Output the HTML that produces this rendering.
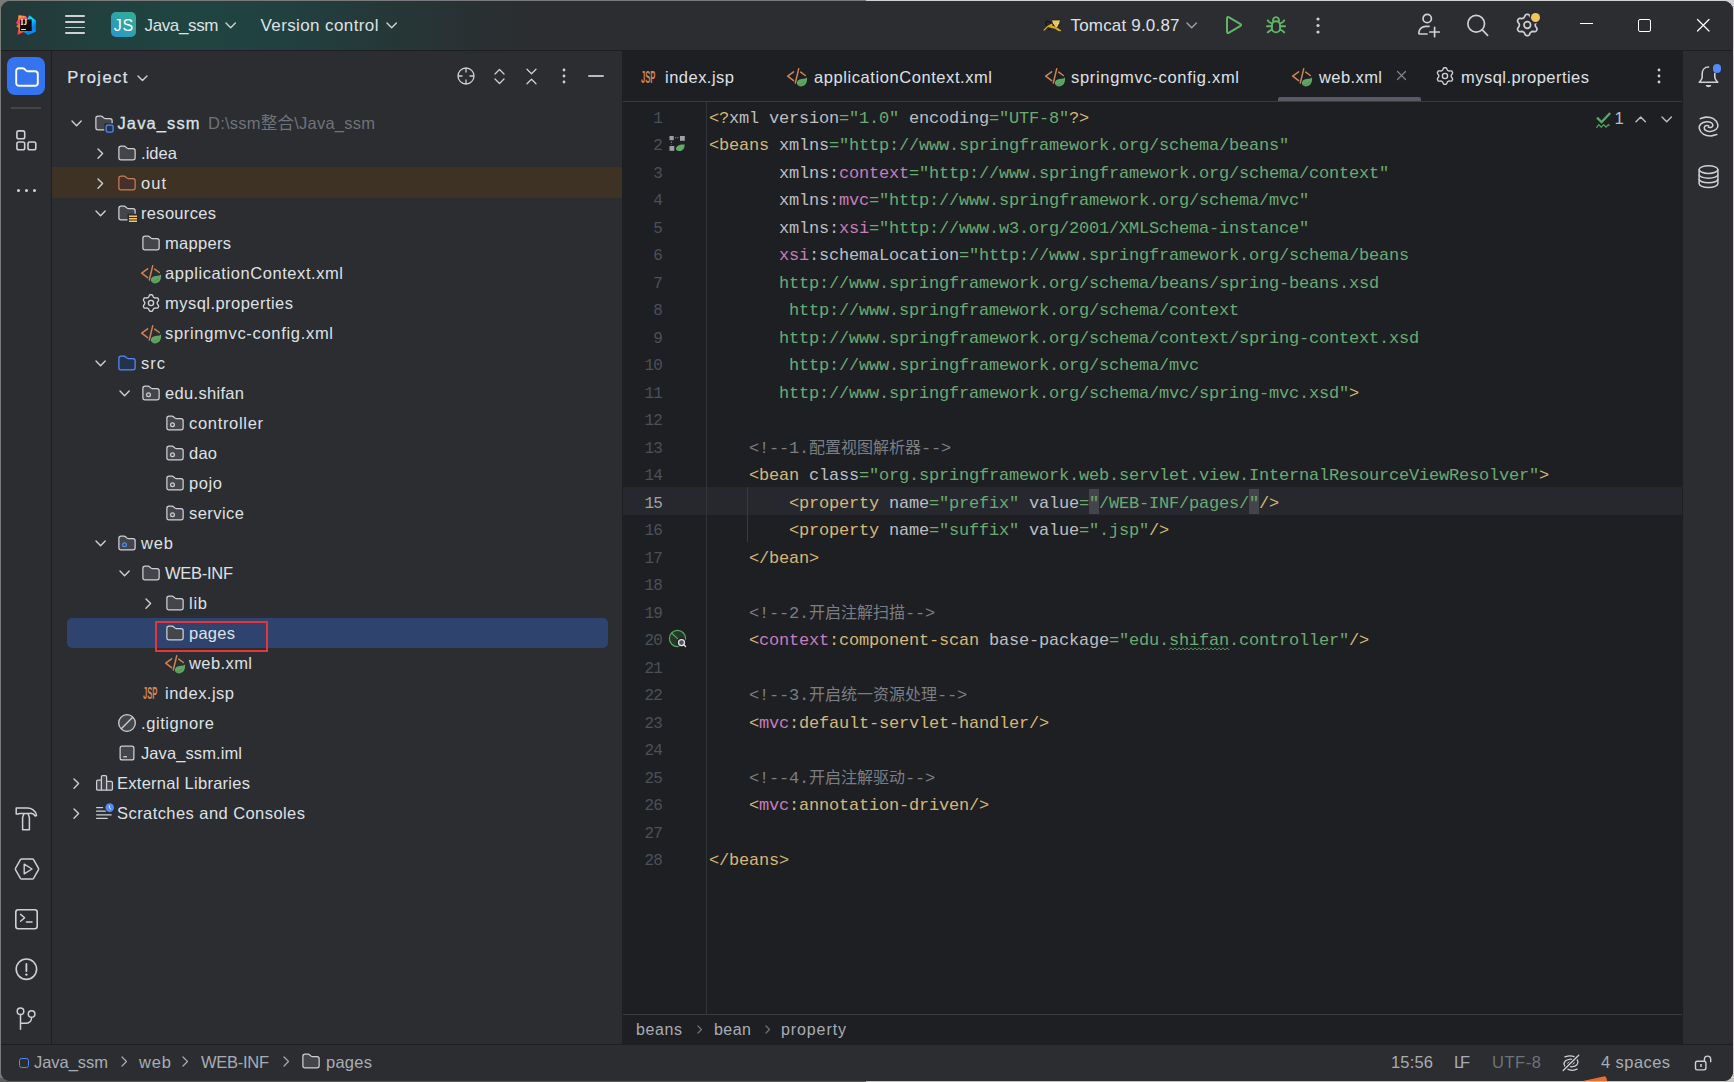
<!DOCTYPE html><html><head><meta charset="utf-8"><title>Java_ssm - web.xml</title><style>html,body{margin:0;padding:0}body{width:1734px;height:1082px;overflow:hidden;position:relative;background:#8a8a8a;}#win{position:absolute;left:1px;top:1px;width:1732px;height:1079.5px;border-radius:9px;overflow:hidden;background:#2B2D30}#win *{box-sizing:border-box}.c{position:absolute;left:0;height:28px;line-height:28px;white-space:pre;font-family:'Liberation Mono','Noto Sans CJK SC',monospace;font-size:17px;letter-spacing:-0.2015px;color:#BCBEC4}.w{}.t{color:#D5B778}.s{color:#6AAB73}.n{color:#C77DBB}.m{color:#7A7E85}.k{font-size:16px;letter-spacing:0}</style></head><body><div style="position:absolute;left:0;top:0;width:866px;height:1082px;background:#7a7a7a"></div>
<div style="position:absolute;left:866px;top:0;width:868px;height:1082px;background:#d2d2d2"></div>
<div style="position:absolute;left:0px;top:1078px;width:866px;height:4px;background:#5c5c5c"></div>
<div style="position:absolute;left:866px;top:1078px;width:868px;height:4px;background:#c4c4c4"></div>
<div id="win"><div style="position:absolute;left:-1px;top:-1px;width:1734px;height:1082px">
<div style="position:absolute;left:0px;top:0px;width:1734px;height:50px;background:linear-gradient(90deg,#243838 0px,#21403E 100px,#1F4541 190px,#214040 290px,#253838 380px,#293133 460px,#2B2D30 535px);"></div>
<div style="position:absolute;left:0px;top:50px;width:1734px;height:1px;background:#1E1F22;"></div>
<svg style="position:absolute;left:16px;top:15px;overflow:visible" width="20" height="20" viewBox="0 0 20 20" fill="none" ><defs><linearGradient id="ijA" x1="0.3" y1="0" x2="0.5" y2="1"><stop offset="0" stop-color="#FDC50D"/><stop offset="0.3" stop-color="#FF318C"/><stop offset="0.55" stop-color="#FC801D"/><stop offset="1" stop-color="#FE2857"/></linearGradient><linearGradient id="ijB" x1="0.2" y1="0" x2="0.8" y2="1"><stop offset="0" stop-color="#07C3F2"/><stop offset="0.35" stop-color="#0DD8FA"/><stop offset="0.7" stop-color="#087CFA"/><stop offset="1" stop-color="#0A9BF5"/></linearGradient></defs><path d="M2.6 0.2 L9.4 1 L12.4 4.6 L6 14 L8.6 16.8 L1.4 19.9 L2.7 13 L0.2 11.6 L1.9 9.6 L0 7.8 L1.7 5.6 Z" fill="url(#ijA)"/><path d="M13.4 0.3 L20 5.4 L19.7 16.8 L12 20.1 L7.8 17 L12 12 L11.6 3.4 Z" fill="url(#ijB)"/><rect x="4.1" y="4.4" width="11.6" height="11.6" fill="#0A0A0C"/><rect x="5.1" y="14" width="4.8" height="0.9" fill="#fff"/><text x="4.6" y="10.4" font-family="Liberation Serif,serif" font-weight="700" font-size="7.4" fill="#fff">IJ</text></svg>
<div style="position:absolute;left:65px;top:15.299999999999999px;width:20px;height:1.9px;background:#CED0D6;border-radius:1px;"></div>
<div style="position:absolute;left:65px;top:20.900000000000002px;width:20px;height:1.9px;background:#CED0D6;border-radius:1px;"></div>
<div style="position:absolute;left:65px;top:26.5px;width:20px;height:1.9px;background:#CED0D6;border-radius:1px;"></div>
<div style="position:absolute;left:65px;top:32.1px;width:20px;height:1.9px;background:#CED0D6;border-radius:1px;"></div>
<div style="position:absolute;left:111px;top:12px;width:25px;height:25px;border-radius:5px;background:linear-gradient(45deg,#2A95CC 0%,#2FA5A8 60%,#34AE8E 100%)"></div>
<span style="position:absolute;left:113.8px;top:13.600000000000001px;height:24px;line-height:24px;font-family:'Liberation Sans','Noto Sans CJK SC',sans-serif;font-size:16px;color:#FFFFFF;font-weight:400;white-space:pre;letter-spacing:0.828px;">JS</span>
<span style="position:absolute;left:144.5px;top:13.8px;height:24px;line-height:24px;font-family:'Liberation Sans','Noto Sans CJK SC',sans-serif;font-size:17px;color:#DFE1E5;font-weight:400;white-space:pre;letter-spacing:-0.362px;">Java_ssm</span>
<svg style="position:absolute;left:226.3px;top:22.900000000000002px;overflow:visible" width="9.4" height="4.8" viewBox="0 0 9.4 4.8" fill="none" ><path d="M0 0 L4.7 4.8 L9.4 0" stroke="#CED0D6" stroke-width="1.4" stroke-linecap="round" stroke-linejoin="round"/></svg>
<span style="position:absolute;left:260.5px;top:13.8px;height:24px;line-height:24px;font-family:'Liberation Sans','Noto Sans CJK SC',sans-serif;font-size:17px;color:#DFE1E5;font-weight:400;white-space:pre;letter-spacing:0.396px;">Version control</span>
<svg style="position:absolute;left:387.3px;top:22.900000000000002px;overflow:visible" width="9.4" height="4.8" viewBox="0 0 9.4 4.8" fill="none" ><path d="M0 0 L4.7 4.8 L9.4 0" stroke="#CED0D6" stroke-width="1.4" stroke-linecap="round" stroke-linejoin="round"/></svg>
<svg style="position:absolute;left:1038px;top:10px;overflow:visible" width="30" height="30" viewBox="0 0 30 30" fill="none" ><path d="M8.6 15.4 C6.6 12.4 8.8 10.8 11 11.6 L13.2 13.4" stroke="#17181A" stroke-width="1.5" fill="none" stroke-linecap="round"/><path d="M5.3 20.7 L6 19.2 L9.4 15.9 L13.6 13.6 L16 16.2 L19 17.4 L23.3 20.4 L22.6 21.3 L20.4 21 L17 18.7 L12.6 17.7 L10 17 L6.6 20.6 Z" fill="#D9A91E"/><path d="M10 17.8 L12.8 19.4 L11.6 19.9 L10.2 18.9 Z" fill="#17181A"/><path d="M14 9 L15.9 9.2 L15 10.8 Z M21.9 9 L20 9.2 L20.9 10.8 Z" fill="#17181A"/><path d="M14.2 10 L15.8 10.5 L20.1 10.5 L21.7 10 L21.2 13.6 L19.2 16.9 L17.6 16.9 L15 13.6 Z" fill="#EDD06C"/><circle cx="15.2" cy="15.2" r="0.75" fill="#0c0c0c"/><circle cx="20.9" cy="15.2" r="0.6" fill="#17181A"/><path d="M16.4 12.4 L17.6 12.7 M19.6 12.4 L18.6 12.7 M17.4 14.6 H18.8" stroke="#B98F2A" stroke-width="0.5"/></svg>
<span style="position:absolute;left:1070.5px;top:13.8px;height:24px;line-height:24px;font-family:'Liberation Sans','Noto Sans CJK SC',sans-serif;font-size:17px;color:#DFE1E5;font-weight:400;white-space:pre;letter-spacing:0.185px;">Tomcat 9.0.87</span>
<svg style="position:absolute;left:1187.3px;top:23.400000000000002px;overflow:visible" width="9.4" height="4.8" viewBox="0 0 9.4 4.8" fill="none" ><path d="M0 0 L4.7 4.8 L9.4 0" stroke="#9DA0A8" stroke-width="1.4" stroke-linecap="round" stroke-linejoin="round"/></svg>
<svg style="position:absolute;left:1225px;top:15px;overflow:visible" width="18" height="20" viewBox="0 0 18 20" fill="none" ><path d="M2 3.2 C2 2.3 2.9 1.8 3.7 2.2 L15.5 9.1 C16.2 9.5 16.2 10.5 15.5 10.9 L3.7 17.8 C2.9 18.2 2 17.7 2 16.8 Z" stroke="#62B567" stroke-width="2" stroke-linejoin="round"/></svg>
<svg style="position:absolute;left:1266px;top:15px;overflow:visible" width="20" height="19" viewBox="0 0 20 19" fill="none" ><rect x="5.9" y="6.2" width="8.2" height="11.2" rx="4.1" stroke="#62B567" stroke-width="1.9"/><path d="M6.9 6.6 C6.7 3.8 8.2 2.1 10 2.1 C11.8 2.1 13.3 3.8 13.1 6.6" stroke="#62B567" stroke-width="1.9" fill="none"/><path d="M5.9 11.3 H1 M14.1 11.3 H19 M5.9 8.4 C4.2 8 2.8 7 1.8 5.4 M14.1 8.4 C15.8 8 17.2 7 18.2 5.4 M6.2 14.6 C4.4 15 3 16 1.8 17.4 M13.8 14.6 C15.6 15 17 16 18.2 17.4" stroke="#62B567" stroke-width="1.9" stroke-linecap="round" fill="none"/></svg>
<svg style="position:absolute;left:1316px;top:16.5px;overflow:visible" width="4" height="17" viewBox="0 0 4 17" fill="none" ><circle cx="2" cy="2" r="1.6" fill="#CED0D6"/><circle cx="2" cy="8.5" r="1.6" fill="#CED0D6"/><circle cx="2" cy="15" r="1.6" fill="#CED0D6"/></svg>
<svg style="position:absolute;left:1415px;top:10px;overflow:visible" width="28" height="30" viewBox="0 0 28 30" fill="none" ><circle cx="12.2" cy="8.5" r="4.2" stroke="#CED0D6" stroke-width="1.7"/><path d="M14 16.3 H11 C6.6 16.3 3.8 19.4 3.8 23 C3.8 23.6 4.2 24 4.8 24 H12" stroke="#CED0D6" stroke-width="1.7" stroke-linecap="round"/><path d="M19.6 17.3 V26.7 M14.9 22 H24.3" stroke="#CED0D6" stroke-width="1.7" stroke-linecap="round"/></svg>
<svg style="position:absolute;left:1465px;top:12px;overflow:visible" width="26" height="26" viewBox="0 0 26 26" fill="none" ><circle cx="11.2" cy="11.8" r="8.35" stroke="#CED0D6" stroke-width="1.7"/><path d="M17.3 17.9 L22.6 23.4" stroke="#CED0D6" stroke-width="1.7" stroke-linecap="round"/></svg>
<svg style="position:absolute;left:1515px;top:13px;overflow:visible" width="24" height="24" viewBox="0 0 24 24" fill="none" ><path d="M20.30 12.00 L20.27 12.70 L20.61 13.47 L21.33 14.42 L21.94 15.51 L22.00 16.52 L21.57 17.35 L21.06 18.14 L20.16 18.60 L18.91 18.61 L17.72 18.46 L16.89 18.55 L16.30 18.93 L15.68 19.25 L15.19 19.93 L14.72 21.03 L14.08 22.11 L13.23 22.66 L12.30 22.70 L11.37 22.66 L10.52 22.11 L9.88 21.03 L9.41 19.93 L8.92 19.25 L8.30 18.93 L7.71 18.55 L6.88 18.46 L5.69 18.61 L4.44 18.60 L3.54 18.14 L3.03 17.35 L2.60 16.52 L2.66 15.51 L3.27 14.42 L3.99 13.47 L4.33 12.70 L4.30 12.00 L4.33 11.30 L3.99 10.53 L3.27 9.58 L2.66 8.49 L2.60 7.48 L3.03 6.65 L3.54 5.86 L4.44 5.40 L5.69 5.39 L6.88 5.54 L7.71 5.45 L8.30 5.07 L8.92 4.75 L9.41 4.07 L9.88 2.97 L10.52 1.89 L11.37 1.34 L12.30 1.30 L13.23 1.34 L14.08 1.89 L14.72 2.97 L15.19 4.07 L15.68 4.75 L16.30 5.07 L16.89 5.45 L17.72 5.54 L18.91 5.39 L20.16 5.40 L21.06 5.86 L21.57 6.65 L22.00 7.48 L21.94 8.49 L21.33 9.58 L20.61 10.53 L20.27 11.30 Z" stroke="#CED0D6" stroke-width="1.7" stroke-linejoin="round"/><circle cx="12.3" cy="12" r="3.3" stroke="#CED0D6" stroke-width="1.7"/></svg>
<div style="position:absolute;left:1530.9px;top:12.9px;width:9.1px;height:9.1px;border-radius:50%;background:#F2C55C;box-shadow:0 0 0 1.5px #2B2D30"></div>
<div style="position:absolute;left:1580px;top:23px;width:12.5px;height:1.3px;background:#FFFFFF;"></div>
<div style="position:absolute;left:1638px;top:19px;width:12.5px;height:12.5px;border:1.3px solid #fff;border-radius:2px"></div>
<svg style="position:absolute;left:1697px;top:19px;overflow:visible" width="12.5" height="12.5" viewBox="0 0 12.5 12.5" fill="none" ><path d="M0.5 0.5 L12 12 M12 0.5 L0.5 12" stroke="#fff" stroke-width="1.2" stroke-linecap="round"/></svg>
<div style="position:absolute;left:0px;top:51px;width:51px;height:994px;background:#2B2D30;"></div>
<div style="position:absolute;left:51px;top:51px;width:1px;height:994px;background:#1E1F22;"></div>
<div style="position:absolute;left:7px;top:57px;width:38px;height:38px;border-radius:8px;background:#3574F0"></div>
<svg style="position:absolute;left:14.5px;top:66.5px;overflow:visible" width="24" height="20" viewBox="0 0 24 20" fill="none" ><path d="M1.2 4 C1.2 2.5 2.4 1.2 4 1.2 H7.6 C8.3 1.2 8.9 1.5 9.4 2 L10.8 3.4 C11.3 3.9 11.9 4.2 12.6 4.2 H20 C21.5 4.2 22.8 5.4 22.8 7 V16 C22.8 17.5 21.6 18.8 20 18.8 H4 C2.5 18.8 1.2 17.6 1.2 16 Z" stroke="#fff" stroke-width="1.9" stroke-linejoin="round"/></svg>
<div style="position:absolute;left:11px;top:107px;width:30px;height:1.5px;background:#43454A;"></div>
<svg style="position:absolute;left:15px;top:129px;overflow:visible" width="24" height="24" viewBox="0 0 24 24" fill="none" ><rect x="1.9" y="1.9" width="7.8" height="7.8" rx="1.8" stroke="#CED0D6" stroke-width="1.6"/><rect x="1.9" y="13" width="7.8" height="7.8" rx="1.8" stroke="#CED0D6" stroke-width="1.6"/><rect x="13" y="13" width="7.8" height="7.8" rx="1.8" stroke="#CED0D6" stroke-width="1.6"/></svg>
<div style="position:absolute;left:16.5px;top:188.79999999999998px;width:3.6px;height:3.6px;border-radius:50%;background:#CED0D6"></div>
<div style="position:absolute;left:24.7px;top:188.79999999999998px;width:3.6px;height:3.6px;border-radius:50%;background:#CED0D6"></div>
<div style="position:absolute;left:32.900000000000006px;top:188.79999999999998px;width:3.6px;height:3.6px;border-radius:50%;background:#CED0D6"></div>
<svg style="position:absolute;left:14px;top:806px;overflow:visible" width="25" height="26" viewBox="0 0 25 26" fill="none" ><path d="M2.2 2 H12.4 C17 1.6 21.6 4 22.6 9.6 L21.2 10 C19.6 7.4 17.4 7.2 15.6 7.4 H5.6 L4.4 8 H2.2 Z" stroke="#CED0D6" stroke-width="1.5" stroke-linejoin="round"/><path d="M10 7.6 L8.6 11.6 V23.8 H15.4 V11.6 L14 7.6" stroke="#CED0D6" stroke-width="1.5" stroke-linejoin="round"/></svg>
<svg style="position:absolute;left:13.5px;top:857.5px;overflow:visible" width="26" height="22" viewBox="0 0 26 22" fill="none" ><path d="M7.6 1 H18.4 C18.9 1 19.3 1.25 19.55 1.65 L24.4 10.2 C24.7 10.7 24.7 11.3 24.4 11.8 L19.55 20.35 C19.3 20.75 18.9 21 18.4 21 H7.6 C7.1 21 6.7 20.75 6.45 20.35 L1.6 11.8 C1.3 11.3 1.3 10.7 1.6 10.2 L6.45 1.65 C6.7 1.25 7.1 1 7.6 1 Z" stroke="#CED0D6" stroke-width="1.5"/><path d="M10.2 6.2 V15.8 L18 11 Z" stroke="#CED0D6" stroke-width="1.4" stroke-linejoin="round"/></svg>
<svg style="position:absolute;left:15px;top:908.5px;overflow:visible" width="23" height="20.5" viewBox="0 0 23 20.5" fill="none" ><rect x="0.8" y="0.8" width="21.4" height="18.9" rx="2.4" stroke="#CED0D6" stroke-width="1.6"/><path d="M5.6 5.4 L9.6 8.8 L5.6 12.2 M11.4 13 H17" stroke="#CED0D6" stroke-width="1.5" stroke-linecap="round" stroke-linejoin="round"/></svg>
<svg style="position:absolute;left:15px;top:957.5px;overflow:visible" width="23" height="23" viewBox="0 0 23 23" fill="none" ><circle cx="11.4" cy="11.2" r="10.2" stroke="#CED0D6" stroke-width="1.6"/><path d="M11.4 6 V13.2" stroke="#CED0D6" stroke-width="1.8" stroke-linecap="round"/><circle cx="11.4" cy="16.6" r="1.2" fill="#CED0D6"/></svg>
<svg style="position:absolute;left:15px;top:1005px;overflow:visible" width="23" height="26" viewBox="0 0 23 26" fill="none" ><circle cx="5.5" cy="6.2" r="3.3" stroke="#CED0D6" stroke-width="1.5"/><circle cx="16.6" cy="9" r="3.3" stroke="#CED0D6" stroke-width="1.5"/><path d="M5.5 9.6 V24.2 M16.6 12.4 C16.6 16.4 14 18.2 10.4 18.2 H5.5" stroke="#CED0D6" stroke-width="1.5" stroke-linecap="round"/></svg>
<div style="position:absolute;left:52px;top:51px;width:570px;height:994px;background:#2B2D30;"></div>
<div style="position:absolute;left:622px;top:51px;width:1px;height:994px;background:#1E1F22;"></div>
<span style="position:absolute;left:67.3px;top:65.0px;height:24px;line-height:24px;font-family:'Liberation Sans','Noto Sans CJK SC',sans-serif;font-size:16.5px;color:#DFE1E5;font-weight:400;white-space:pre;letter-spacing:1.440px;-webkit-text-stroke:0.22px #DFE1E5;">Project</span>
<svg style="position:absolute;left:137.5px;top:75.7px;overflow:visible" width="9" height="4.6" viewBox="0 0 9 4.6" fill="none" ><path d="M0 0 L4.5 4.6 L9 0" stroke="#CED0D6" stroke-width="1.4" stroke-linecap="round" stroke-linejoin="round"/></svg>
<svg style="position:absolute;left:456px;top:66px;overflow:visible" width="20" height="20" viewBox="0 0 20 20" fill="none" ><circle cx="10" cy="10" r="8" stroke="#CED0D6" stroke-width="1.3"/><path d="M10 2 V6.5 M10 13.5 V18 M2 10 H6.5 M13.5 10 H18" stroke="#CED0D6" stroke-width="1.3"/></svg>
<svg style="position:absolute;left:493.5px;top:67px;overflow:visible" width="11" height="19" viewBox="0 0 11 19" fill="none" ><path d="M1 7 L5.5 2.5 L10 7 M1 12 L5.5 16.5 L10 12" stroke="#CED0D6" stroke-width="1.3" stroke-linecap="round" stroke-linejoin="round"/></svg>
<svg style="position:absolute;left:525.5px;top:67px;overflow:visible" width="11" height="19" viewBox="0 0 11 19" fill="none" ><path d="M1 2.2 L5.5 6.7 L10 2.2 M1 16.8 L5.5 12.3 L10 16.8" stroke="#CED0D6" stroke-width="1.3" stroke-linecap="round" stroke-linejoin="round"/></svg>
<svg style="position:absolute;left:562px;top:68px;overflow:visible" width="4" height="16" viewBox="0 0 4 16" fill="none" ><circle cx="2" cy="2" r="1.4" fill="#CED0D6"/><circle cx="2" cy="8" r="1.4" fill="#CED0D6"/><circle cx="2" cy="14" r="1.4" fill="#CED0D6"/></svg>
<div style="position:absolute;left:588px;top:74.8px;width:16px;height:1.9px;background:#B4B8BF;border-radius:1px;"></div>
<div style="position:absolute;left:52px;top:167px;width:570px;height:30.7px;background:#3D3223;"></div>
<div style="position:absolute;left:67px;top:617.5px;width:541px;height:30px;background:#2E436E;border-radius:5px;"></div>
<div style="position:absolute;left:155px;top:621px;width:113px;height:31px;border:2px solid #E5343A;box-sizing:border-box"></div>
<svg style="position:absolute;left:72.4px;top:121.15px;overflow:visible" width="9.2" height="4.7" viewBox="0 0 9.2 4.7" fill="none" ><path d="M0 0 L4.6 4.7 L9.2 0" stroke="#CED0D6" stroke-width="1.4" stroke-linecap="round" stroke-linejoin="round"/></svg>
<svg style="position:absolute;left:94px;top:113px;overflow:visible" width="20" height="20" viewBox="0 0 16 16" fill="none" ><path d="M1.5 4.2 C1.5 3.26 2.26 2.5 3.2 2.5 H5.6 C6.05 2.5 6.48 2.68 6.8 3 L7.7 3.9 C8.02 4.22 8.45 4.4 8.9 4.4 H12.8 C13.74 4.4 14.5 5.16 14.5 6.1 V11.8 C14.5 12.74 13.74 13.5 12.8 13.5 H3.2 C2.26 13.5 1.5 12.74 1.5 11.8 Z" fill="#43454A" stroke="#CED0D6" stroke-width="1"/><rect x="8.2" y="8.2" width="8.6" height="8.6" fill="#2B2D30"/><rect x="9.7" y="9.7" width="5.6" height="5.6" rx="1.4" fill="#25324D" stroke="#548AF7" stroke-width="1"/></svg>
<span style="position:absolute;left:117.5px;top:111.0px;height:24px;line-height:24px;font-family:'Liberation Sans','Noto Sans CJK SC',sans-serif;font-size:16.5px;color:#DFE1E5;font-weight:400;white-space:pre;letter-spacing:1.103px;-webkit-text-stroke:0.3px #DFE1E5;">Java_ssm</span>
<span style="position:absolute;left:208px;top:111.0px;height:24px;line-height:24px;font-family:'Liberation Sans','Noto Sans CJK SC',sans-serif;font-size:16.5px;color:#6F737A;font-weight:400;white-space:pre;letter-spacing:0.238px;">D:\ssm整合\Java_ssm</span>
<svg style="position:absolute;left:98.2px;top:148.9px;overflow:visible" width="4.6" height="9.2" viewBox="0 0 4.6 9.2" fill="none" ><path d="M0 0 L4.6 4.6 L0 9.2" stroke="#CED0D6" stroke-width="1.4" stroke-linecap="round" stroke-linejoin="round"/></svg>
<svg style="position:absolute;left:117px;top:143px;overflow:visible" width="20" height="20" viewBox="0 0 16 16" fill="none" ><path d="M1.5 4.2 C1.5 3.26 2.26 2.5 3.2 2.5 H5.6 C6.05 2.5 6.48 2.68 6.8 3 L7.7 3.9 C8.02 4.22 8.45 4.4 8.9 4.4 H12.8 C13.74 4.4 14.5 5.16 14.5 6.1 V11.8 C14.5 12.74 13.74 13.5 12.8 13.5 H3.2 C2.26 13.5 1.5 12.74 1.5 11.8 Z" fill="#43454A" stroke="#CED0D6" stroke-width="1"/></svg>
<span style="position:absolute;left:141px;top:141.0px;height:24px;line-height:24px;font-family:'Liberation Sans','Noto Sans CJK SC',sans-serif;font-size:16.5px;color:#DFE1E5;font-weight:400;white-space:pre;letter-spacing:0.055px;">.idea</span>
<svg style="position:absolute;left:98.2px;top:178.9px;overflow:visible" width="4.6" height="9.2" viewBox="0 0 4.6 9.2" fill="none" ><path d="M0 0 L4.6 4.6 L0 9.2" stroke="#CED0D6" stroke-width="1.4" stroke-linecap="round" stroke-linejoin="round"/></svg>
<svg style="position:absolute;left:117px;top:173px;overflow:visible" width="20" height="20" viewBox="0 0 16 16" fill="none" ><path d="M1.5 4.2 C1.5 3.26 2.26 2.5 3.2 2.5 H5.6 C6.05 2.5 6.48 2.68 6.8 3 L7.7 3.9 C8.02 4.22 8.45 4.4 8.9 4.4 H12.8 C13.74 4.4 14.5 5.16 14.5 6.1 V11.8 C14.5 12.74 13.74 13.5 12.8 13.5 H3.2 C2.26 13.5 1.5 12.74 1.5 11.8 Z" fill="#45302B" stroke="#C77D55" stroke-width="1"/></svg>
<span style="position:absolute;left:141px;top:171.0px;height:24px;line-height:24px;font-family:'Liberation Sans','Noto Sans CJK SC',sans-serif;font-size:16.5px;color:#DFE1E5;font-weight:400;white-space:pre;letter-spacing:1.031px;">out</span>
<svg style="position:absolute;left:96.4px;top:211.15px;overflow:visible" width="9.2" height="4.7" viewBox="0 0 9.2 4.7" fill="none" ><path d="M0 0 L4.6 4.7 L9.2 0" stroke="#CED0D6" stroke-width="1.4" stroke-linecap="round" stroke-linejoin="round"/></svg>
<svg style="position:absolute;left:117px;top:203px;overflow:visible" width="20" height="20" viewBox="0 0 16 16" fill="none" ><path d="M1.5 4.2 C1.5 3.26 2.26 2.5 3.2 2.5 H5.6 C6.05 2.5 6.48 2.68 6.8 3 L7.7 3.9 C8.02 4.22 8.45 4.4 8.9 4.4 H12.8 C13.74 4.4 14.5 5.16 14.5 6.1 V11.8 C14.5 12.74 13.74 13.5 12.8 13.5 H3.2 C2.26 13.5 1.5 12.74 1.5 11.8 Z" fill="#43454A" stroke="#CED0D6" stroke-width="1"/><rect x="8.4" y="8.6" width="8.6" height="8.4" fill="#2B2D30"/><path d="M9.6 10.6 H16 M9.6 12.6 H16 M9.6 14.6 H16" stroke="#F2C55C" stroke-width="1.15"/></svg>
<span style="position:absolute;left:141px;top:201.0px;height:24px;line-height:24px;font-family:'Liberation Sans','Noto Sans CJK SC',sans-serif;font-size:16.5px;color:#DFE1E5;font-weight:400;white-space:pre;letter-spacing:0.318px;">resources</span>
<svg style="position:absolute;left:141px;top:233px;overflow:visible" width="20" height="20" viewBox="0 0 16 16" fill="none" ><path d="M1.5 4.2 C1.5 3.26 2.26 2.5 3.2 2.5 H5.6 C6.05 2.5 6.48 2.68 6.8 3 L7.7 3.9 C8.02 4.22 8.45 4.4 8.9 4.4 H12.8 C13.74 4.4 14.5 5.16 14.5 6.1 V11.8 C14.5 12.74 13.74 13.5 12.8 13.5 H3.2 C2.26 13.5 1.5 12.74 1.5 11.8 Z" fill="#43454A" stroke="#CED0D6" stroke-width="1"/></svg>
<span style="position:absolute;left:165px;top:231.0px;height:24px;line-height:24px;font-family:'Liberation Sans','Noto Sans CJK SC',sans-serif;font-size:16.5px;color:#DFE1E5;font-weight:400;white-space:pre;letter-spacing:0.299px;">mappers</span>
<svg style="position:absolute;left:140.1px;top:264px;overflow:visible" width="20" height="20" viewBox="0 0 20 20" fill="none" ><path d="M7.6 4.8 L1.7 9.2 L7.6 13.6" stroke="#CF8456" stroke-width="1.5" stroke-linecap="round" stroke-linejoin="round"/><path d="M12.7 1.8 L9.3 16" stroke="#CF8456" stroke-width="1.5" stroke-linecap="round"/><path d="M14.7 5.1 L19.3 8.5" stroke="#CF8456" stroke-width="1.5" stroke-linecap="round"/><path d="M21 10.4 C21.6 14.4 20 17.6 17.4 18.8 C14.8 19.9 12.4 19.4 11.3 17.6 C10.2 15.6 11.2 13.2 13.6 12.4 C16 11.7 19 12 21 10.4 Z" fill="#5FA664"/><path d="M12.4 18.2 C14.6 17.8 16.6 16.6 18.2 14.8" stroke="#3D7443" stroke-width="0.7" fill="none" stroke-dasharray="1.6 0.8"/></svg>
<span style="position:absolute;left:165px;top:261.0px;height:24px;line-height:24px;font-family:'Liberation Sans','Noto Sans CJK SC',sans-serif;font-size:16.5px;color:#DFE1E5;font-weight:400;white-space:pre;letter-spacing:0.571px;">applicationContext.xml</span>
<svg style="position:absolute;left:141px;top:293px;overflow:visible" width="20" height="20" viewBox="0 0 20 20" fill="none" ><path d="M16.25 10.00 L16.23 10.54 L16.49 11.14 L17.05 11.89 L17.53 12.74 L17.57 13.53 L17.23 14.17 L16.84 14.79 L16.14 15.15 L15.16 15.16 L14.24 15.05 L13.58 15.12 L13.12 15.41 L12.64 15.66 L12.25 16.19 L11.89 17.05 L11.39 17.89 L10.73 18.32 L10.00 18.35 L9.27 18.32 L8.61 17.89 L8.11 17.05 L7.75 16.19 L7.36 15.66 L6.88 15.41 L6.42 15.12 L5.76 15.05 L4.84 15.16 L3.86 15.15 L3.16 14.79 L2.77 14.18 L2.43 13.53 L2.47 12.74 L2.95 11.89 L3.51 11.14 L3.77 10.54 L3.75 10.00 L3.77 9.46 L3.51 8.86 L2.95 8.11 L2.47 7.26 L2.43 6.47 L2.77 5.82 L3.16 5.21 L3.86 4.85 L4.84 4.84 L5.76 4.95 L6.42 4.88 L6.87 4.59 L7.36 4.34 L7.75 3.81 L8.11 2.95 L8.61 2.11 L9.27 1.68 L10.00 1.65 L10.73 1.68 L11.39 2.11 L11.89 2.95 L12.25 3.81 L12.64 4.34 L13.12 4.59 L13.58 4.88 L14.24 4.95 L15.16 4.84 L16.14 4.85 L16.84 5.21 L17.23 5.83 L17.57 6.47 L17.53 7.26 L17.05 8.11 L16.49 8.86 L16.23 9.46 Z" stroke="#CED0D6" stroke-width="1.4" stroke-linejoin="round"/><circle cx="10" cy="10" r="2.6" stroke="#CED0D6" stroke-width="1.4"/></svg>
<span style="position:absolute;left:165px;top:291.0px;height:24px;line-height:24px;font-family:'Liberation Sans','Noto Sans CJK SC',sans-serif;font-size:16.5px;color:#DFE1E5;font-weight:400;white-space:pre;letter-spacing:0.464px;">mysql.properties</span>
<svg style="position:absolute;left:140.1px;top:324px;overflow:visible" width="20" height="20" viewBox="0 0 20 20" fill="none" ><path d="M7.6 4.8 L1.7 9.2 L7.6 13.6" stroke="#CF8456" stroke-width="1.5" stroke-linecap="round" stroke-linejoin="round"/><path d="M12.7 1.8 L9.3 16" stroke="#CF8456" stroke-width="1.5" stroke-linecap="round"/><path d="M14.7 5.1 L19.3 8.5" stroke="#CF8456" stroke-width="1.5" stroke-linecap="round"/><path d="M21 10.4 C21.6 14.4 20 17.6 17.4 18.8 C14.8 19.9 12.4 19.4 11.3 17.6 C10.2 15.6 11.2 13.2 13.6 12.4 C16 11.7 19 12 21 10.4 Z" fill="#5FA664"/><path d="M12.4 18.2 C14.6 17.8 16.6 16.6 18.2 14.8" stroke="#3D7443" stroke-width="0.7" fill="none" stroke-dasharray="1.6 0.8"/></svg>
<span style="position:absolute;left:165px;top:321.0px;height:24px;line-height:24px;font-family:'Liberation Sans','Noto Sans CJK SC',sans-serif;font-size:16.5px;color:#DFE1E5;font-weight:400;white-space:pre;letter-spacing:0.686px;">springmvc-config.xml</span>
<svg style="position:absolute;left:96.4px;top:361.15px;overflow:visible" width="9.2" height="4.7" viewBox="0 0 9.2 4.7" fill="none" ><path d="M0 0 L4.6 4.7 L9.2 0" stroke="#CED0D6" stroke-width="1.4" stroke-linecap="round" stroke-linejoin="round"/></svg>
<svg style="position:absolute;left:117px;top:353px;overflow:visible" width="20" height="20" viewBox="0 0 16 16" fill="none" ><path d="M1.5 4.2 C1.5 3.26 2.26 2.5 3.2 2.5 H5.6 C6.05 2.5 6.48 2.68 6.8 3 L7.7 3.9 C8.02 4.22 8.45 4.4 8.9 4.4 H12.8 C13.74 4.4 14.5 5.16 14.5 6.1 V11.8 C14.5 12.74 13.74 13.5 12.8 13.5 H3.2 C2.26 13.5 1.5 12.74 1.5 11.8 Z" fill="#25324D" stroke="#548AF7" stroke-width="1"/></svg>
<span style="position:absolute;left:141px;top:351.0px;height:24px;line-height:24px;font-family:'Liberation Sans','Noto Sans CJK SC',sans-serif;font-size:16.5px;color:#DFE1E5;font-weight:400;white-space:pre;letter-spacing:1.000px;">src</span>
<svg style="position:absolute;left:120.4px;top:391.15px;overflow:visible" width="9.2" height="4.7" viewBox="0 0 9.2 4.7" fill="none" ><path d="M0 0 L4.6 4.7 L9.2 0" stroke="#CED0D6" stroke-width="1.4" stroke-linecap="round" stroke-linejoin="round"/></svg>
<svg style="position:absolute;left:141px;top:383px;overflow:visible" width="20" height="20" viewBox="0 0 16 16" fill="none" ><path d="M1.5 4.2 C1.5 3.26 2.26 2.5 3.2 2.5 H5.6 C6.05 2.5 6.48 2.68 6.8 3 L7.7 3.9 C8.02 4.22 8.45 4.4 8.9 4.4 H12.8 C13.74 4.4 14.5 5.16 14.5 6.1 V11.8 C14.5 12.74 13.74 13.5 12.8 13.5 H3.2 C2.26 13.5 1.5 12.74 1.5 11.8 Z" fill="#43454A" stroke="#CED0D6" stroke-width="1"/><circle cx="6" cy="9.3" r="1.5" stroke="#CED0D6" stroke-width="1" fill="none"/></svg>
<span style="position:absolute;left:165px;top:381.0px;height:24px;line-height:24px;font-family:'Liberation Sans','Noto Sans CJK SC',sans-serif;font-size:16.5px;color:#DFE1E5;font-weight:400;white-space:pre;letter-spacing:0.316px;">edu.shifan</span>
<svg style="position:absolute;left:165px;top:413px;overflow:visible" width="20" height="20" viewBox="0 0 16 16" fill="none" ><path d="M1.5 4.2 C1.5 3.26 2.26 2.5 3.2 2.5 H5.6 C6.05 2.5 6.48 2.68 6.8 3 L7.7 3.9 C8.02 4.22 8.45 4.4 8.9 4.4 H12.8 C13.74 4.4 14.5 5.16 14.5 6.1 V11.8 C14.5 12.74 13.74 13.5 12.8 13.5 H3.2 C2.26 13.5 1.5 12.74 1.5 11.8 Z" fill="#43454A" stroke="#CED0D6" stroke-width="1"/><circle cx="6" cy="9.3" r="1.5" stroke="#CED0D6" stroke-width="1" fill="none"/></svg>
<span style="position:absolute;left:189px;top:411.0px;height:24px;line-height:24px;font-family:'Liberation Sans','Noto Sans CJK SC',sans-serif;font-size:16.5px;color:#DFE1E5;font-weight:400;white-space:pre;letter-spacing:0.681px;">controller</span>
<svg style="position:absolute;left:165px;top:443px;overflow:visible" width="20" height="20" viewBox="0 0 16 16" fill="none" ><path d="M1.5 4.2 C1.5 3.26 2.26 2.5 3.2 2.5 H5.6 C6.05 2.5 6.48 2.68 6.8 3 L7.7 3.9 C8.02 4.22 8.45 4.4 8.9 4.4 H12.8 C13.74 4.4 14.5 5.16 14.5 6.1 V11.8 C14.5 12.74 13.74 13.5 12.8 13.5 H3.2 C2.26 13.5 1.5 12.74 1.5 11.8 Z" fill="#43454A" stroke="#CED0D6" stroke-width="1"/><circle cx="6" cy="9.3" r="1.5" stroke="#CED0D6" stroke-width="1" fill="none"/></svg>
<span style="position:absolute;left:189px;top:441.0px;height:24px;line-height:24px;font-family:'Liberation Sans','Noto Sans CJK SC',sans-serif;font-size:16.5px;color:#DFE1E5;font-weight:400;white-space:pre;letter-spacing:0.234px;">dao</span>
<svg style="position:absolute;left:165px;top:473px;overflow:visible" width="20" height="20" viewBox="0 0 16 16" fill="none" ><path d="M1.5 4.2 C1.5 3.26 2.26 2.5 3.2 2.5 H5.6 C6.05 2.5 6.48 2.68 6.8 3 L7.7 3.9 C8.02 4.22 8.45 4.4 8.9 4.4 H12.8 C13.74 4.4 14.5 5.16 14.5 6.1 V11.8 C14.5 12.74 13.74 13.5 12.8 13.5 H3.2 C2.26 13.5 1.5 12.74 1.5 11.8 Z" fill="#43454A" stroke="#CED0D6" stroke-width="1"/><circle cx="6" cy="9.3" r="1.5" stroke="#CED0D6" stroke-width="1" fill="none"/></svg>
<span style="position:absolute;left:189px;top:471.0px;height:24px;line-height:24px;font-family:'Liberation Sans','Noto Sans CJK SC',sans-serif;font-size:16.5px;color:#DFE1E5;font-weight:400;white-space:pre;letter-spacing:0.599px;">pojo</span>
<svg style="position:absolute;left:165px;top:503px;overflow:visible" width="20" height="20" viewBox="0 0 16 16" fill="none" ><path d="M1.5 4.2 C1.5 3.26 2.26 2.5 3.2 2.5 H5.6 C6.05 2.5 6.48 2.68 6.8 3 L7.7 3.9 C8.02 4.22 8.45 4.4 8.9 4.4 H12.8 C13.74 4.4 14.5 5.16 14.5 6.1 V11.8 C14.5 12.74 13.74 13.5 12.8 13.5 H3.2 C2.26 13.5 1.5 12.74 1.5 11.8 Z" fill="#43454A" stroke="#CED0D6" stroke-width="1"/><circle cx="6" cy="9.3" r="1.5" stroke="#CED0D6" stroke-width="1" fill="none"/></svg>
<span style="position:absolute;left:189px;top:501.0px;height:24px;line-height:24px;font-family:'Liberation Sans','Noto Sans CJK SC',sans-serif;font-size:16.5px;color:#DFE1E5;font-weight:400;white-space:pre;letter-spacing:0.456px;">service</span>
<svg style="position:absolute;left:96.4px;top:541.15px;overflow:visible" width="9.2" height="4.7" viewBox="0 0 9.2 4.7" fill="none" ><path d="M0 0 L4.6 4.7 L9.2 0" stroke="#CED0D6" stroke-width="1.4" stroke-linecap="round" stroke-linejoin="round"/></svg>
<svg style="position:absolute;left:117px;top:533px;overflow:visible" width="20" height="20" viewBox="0 0 16 16" fill="none" ><path d="M1.5 4.2 C1.5 3.26 2.26 2.5 3.2 2.5 H5.6 C6.05 2.5 6.48 2.68 6.8 3 L7.7 3.9 C8.02 4.22 8.45 4.4 8.9 4.4 H12.8 C13.74 4.4 14.5 5.16 14.5 6.1 V11.8 C14.5 12.74 13.74 13.5 12.8 13.5 H3.2 C2.26 13.5 1.5 12.74 1.5 11.8 Z" fill="#43454A" stroke="#CED0D6" stroke-width="1"/><circle cx="6" cy="9.3" r="1.5" stroke="#548AF7" stroke-width="1" fill="none"/></svg>
<span style="position:absolute;left:141px;top:531.0px;height:24px;line-height:24px;font-family:'Liberation Sans','Noto Sans CJK SC',sans-serif;font-size:16.5px;color:#DFE1E5;font-weight:400;white-space:pre;letter-spacing:0.859px;">web</span>
<svg style="position:absolute;left:120.4px;top:571.15px;overflow:visible" width="9.2" height="4.7" viewBox="0 0 9.2 4.7" fill="none" ><path d="M0 0 L4.6 4.7 L9.2 0" stroke="#CED0D6" stroke-width="1.4" stroke-linecap="round" stroke-linejoin="round"/></svg>
<svg style="position:absolute;left:141px;top:563px;overflow:visible" width="20" height="20" viewBox="0 0 16 16" fill="none" ><path d="M1.5 4.2 C1.5 3.26 2.26 2.5 3.2 2.5 H5.6 C6.05 2.5 6.48 2.68 6.8 3 L7.7 3.9 C8.02 4.22 8.45 4.4 8.9 4.4 H12.8 C13.74 4.4 14.5 5.16 14.5 6.1 V11.8 C14.5 12.74 13.74 13.5 12.8 13.5 H3.2 C2.26 13.5 1.5 12.74 1.5 11.8 Z" fill="#43454A" stroke="#CED0D6" stroke-width="1"/></svg>
<span style="position:absolute;left:165px;top:561.0px;height:24px;line-height:24px;font-family:'Liberation Sans','Noto Sans CJK SC',sans-serif;font-size:16.5px;color:#DFE1E5;font-weight:400;white-space:pre;letter-spacing:-0.279px;">WEB-INF</span>
<svg style="position:absolute;left:146.2px;top:598.9px;overflow:visible" width="4.6" height="9.2" viewBox="0 0 4.6 9.2" fill="none" ><path d="M0 0 L4.6 4.6 L0 9.2" stroke="#CED0D6" stroke-width="1.4" stroke-linecap="round" stroke-linejoin="round"/></svg>
<svg style="position:absolute;left:165px;top:593px;overflow:visible" width="20" height="20" viewBox="0 0 16 16" fill="none" ><path d="M1.5 4.2 C1.5 3.26 2.26 2.5 3.2 2.5 H5.6 C6.05 2.5 6.48 2.68 6.8 3 L7.7 3.9 C8.02 4.22 8.45 4.4 8.9 4.4 H12.8 C13.74 4.4 14.5 5.16 14.5 6.1 V11.8 C14.5 12.74 13.74 13.5 12.8 13.5 H3.2 C2.26 13.5 1.5 12.74 1.5 11.8 Z" fill="#43454A" stroke="#CED0D6" stroke-width="1"/></svg>
<span style="position:absolute;left:189px;top:591.0px;height:24px;line-height:24px;font-family:'Liberation Sans','Noto Sans CJK SC',sans-serif;font-size:16.5px;color:#DFE1E5;font-weight:400;white-space:pre;letter-spacing:0.742px;">lib</span>
<svg style="position:absolute;left:165px;top:623px;overflow:visible" width="20" height="20" viewBox="0 0 16 16" fill="none" ><path d="M1.5 4.2 C1.5 3.26 2.26 2.5 3.2 2.5 H5.6 C6.05 2.5 6.48 2.68 6.8 3 L7.7 3.9 C8.02 4.22 8.45 4.4 8.9 4.4 H12.8 C13.74 4.4 14.5 5.16 14.5 6.1 V11.8 C14.5 12.74 13.74 13.5 12.8 13.5 H3.2 C2.26 13.5 1.5 12.74 1.5 11.8 Z" fill="#43454A" stroke="#CED0D6" stroke-width="1"/></svg>
<span style="position:absolute;left:189px;top:621.0px;height:24px;line-height:24px;font-family:'Liberation Sans','Noto Sans CJK SC',sans-serif;font-size:16.5px;color:#DFE1E5;font-weight:400;white-space:pre;letter-spacing:0.258px;">pages</span>
<svg style="position:absolute;left:164.1px;top:654px;overflow:visible" width="20" height="20" viewBox="0 0 20 20" fill="none" ><path d="M7.6 4.8 L1.7 9.2 L7.6 13.6" stroke="#CF8456" stroke-width="1.5" stroke-linecap="round" stroke-linejoin="round"/><path d="M12.7 1.8 L9.3 16" stroke="#CF8456" stroke-width="1.5" stroke-linecap="round"/><path d="M14.7 5.1 L19.3 8.5" stroke="#CF8456" stroke-width="1.5" stroke-linecap="round"/><path d="M21 10.4 C21.6 14.4 20 17.6 17.4 18.8 C14.8 19.9 12.4 19.4 11.3 17.6 C10.2 15.6 11.2 13.2 13.6 12.4 C16 11.7 19 12 21 10.4 Z" fill="#5FA664"/><path d="M12.4 18.2 C14.6 17.8 16.6 16.6 18.2 14.8" stroke="#3D7443" stroke-width="0.7" fill="none" stroke-dasharray="1.6 0.8"/></svg>
<span style="position:absolute;left:189px;top:651.0px;height:24px;line-height:24px;font-family:'Liberation Sans','Noto Sans CJK SC',sans-serif;font-size:16.5px;color:#DFE1E5;font-weight:400;white-space:pre;letter-spacing:0.414px;">web.xml</span>
<span style="position:absolute;left:142.5px;top:681.3px;height:24px;line-height:24px;font-family:'Liberation Sans','Noto Sans CJK SC',sans-serif;font-size:16.2px;color:#D08558;font-weight:700;white-space:pre;letter-spacing:0.000px;transform:scaleX(0.47);transform-origin:left center;">JSP</span>
<span style="position:absolute;left:165px;top:681.0px;height:24px;line-height:24px;font-family:'Liberation Sans','Noto Sans CJK SC',sans-serif;font-size:16.5px;color:#DFE1E5;font-weight:400;white-space:pre;letter-spacing:0.484px;">index.jsp</span>
<svg style="position:absolute;left:117px;top:713px;overflow:visible" width="20" height="20" viewBox="0 0 20 20" fill="none" ><circle cx="10" cy="10" r="8.3" stroke="#CED0D6" stroke-width="1.3" fill="#43454A"/><path d="M4.3 15.7 L15.7 4.3" stroke="#CED0D6" stroke-width="1.3"/></svg>
<span style="position:absolute;left:141px;top:711.0px;height:24px;line-height:24px;font-family:'Liberation Sans','Noto Sans CJK SC',sans-serif;font-size:16.5px;color:#DFE1E5;font-weight:400;white-space:pre;letter-spacing:0.568px;">.gitignore</span>
<svg style="position:absolute;left:117px;top:743px;overflow:visible" width="20" height="20" viewBox="0 0 16 16" fill="none" ><rect x="2.5" y="2.5" width="11" height="11" rx="1.6" fill="#43454A" stroke="#CED0D6" stroke-width="1"/><path d="M5 11 H8" stroke="#CED0D6" stroke-width="1"/></svg>
<span style="position:absolute;left:141px;top:741.0px;height:24px;line-height:24px;font-family:'Liberation Sans','Noto Sans CJK SC',sans-serif;font-size:16.5px;color:#DFE1E5;font-weight:400;white-space:pre;letter-spacing:0.097px;">Java_ssm.iml</span>
<svg style="position:absolute;left:74.2px;top:778.9px;overflow:visible" width="4.6" height="9.2" viewBox="0 0 4.6 9.2" fill="none" ><path d="M0 0 L4.6 4.6 L0 9.2" stroke="#CED0D6" stroke-width="1.4" stroke-linecap="round" stroke-linejoin="round"/></svg>
<svg style="position:absolute;left:94px;top:773px;overflow:visible" width="20" height="20" viewBox="0 0 20 20" fill="none" ><path d="M2.6 16 V8.4 a1.2 1.2 0 0 1 1.2 -1.2 H7.4 V3.8 a1.2 1.2 0 0 1 1.2 -1.2 H11.4 a1.2 1.2 0 0 1 1.2 1.2 V8.4 H17.2 a1.2 1.2 0 0 1 1.2 1.2 V16 a1.2 1.2 0 0 1 -1.2 1.2 H3.8 a1.2 1.2 0 0 1 -1.2 -1.2 Z" stroke="#CED0D6" stroke-width="1.25" stroke-linejoin="round" fill="#43454A"/><path d="M7.4 7.2 V17.2 M12.6 8.4 V17.2" stroke="#CED0D6" stroke-width="1.25"/></svg>
<span style="position:absolute;left:117px;top:771.0px;height:24px;line-height:24px;font-family:'Liberation Sans','Noto Sans CJK SC',sans-serif;font-size:16.5px;color:#DFE1E5;font-weight:400;white-space:pre;letter-spacing:0.271px;">External Libraries</span>
<svg style="position:absolute;left:74.2px;top:808.9px;overflow:visible" width="4.6" height="9.2" viewBox="0 0 4.6 9.2" fill="none" ><path d="M0 0 L4.6 4.6 L0 9.2" stroke="#CED0D6" stroke-width="1.4" stroke-linecap="round" stroke-linejoin="round"/></svg>
<svg style="position:absolute;left:94px;top:803px;overflow:visible" width="20" height="20" viewBox="0 0 20 20" fill="none" ><path d="M2.6 4.6 H8.6 M2.6 8.2 H11.4 M2.6 11.8 H17.2 M2.6 15.4 H13.2" stroke="#CED0D6" stroke-width="1.25" stroke-linecap="round"/><circle cx="15.7" cy="4.6" r="5.2" fill="#2B2D30"/><circle cx="15.7" cy="4.6" r="4.3" fill="#548AF7"/><path d="M15.4 2.3 V4.9 L17.1 6.3" stroke="#E8EEFB" stroke-width="1" fill="none"/></svg>
<span style="position:absolute;left:117px;top:801.0px;height:24px;line-height:24px;font-family:'Liberation Sans','Noto Sans CJK SC',sans-serif;font-size:16.5px;color:#DFE1E5;font-weight:400;white-space:pre;letter-spacing:0.435px;">Scratches and Consoles</span>
<div style="position:absolute;left:623px;top:51px;width:1060px;height:994px;background:#1E1F22;"></div>
<div style="position:absolute;left:623px;top:101px;width:1059px;height:1px;background:#393B40;"></div>
<span style="position:absolute;left:641px;top:65.3px;height:24px;line-height:24px;font-family:'Liberation Sans','Noto Sans CJK SC',sans-serif;font-size:16.2px;color:#D08558;font-weight:700;white-space:pre;letter-spacing:0.000px;transform:scaleX(0.47);transform-origin:left center;">JSP</span>
<span style="position:absolute;left:665px;top:65.0px;height:24px;line-height:24px;font-family:'Liberation Sans','Noto Sans CJK SC',sans-serif;font-size:16.5px;color:#DFE1E5;font-weight:400;white-space:pre;letter-spacing:0.484px;">index.jsp</span>
<svg style="position:absolute;left:786px;top:67px;overflow:visible" width="20" height="20" viewBox="0 0 20 20" fill="none" ><path d="M7.6 4.8 L1.7 9.2 L7.6 13.6" stroke="#CF8456" stroke-width="1.5" stroke-linecap="round" stroke-linejoin="round"/><path d="M12.7 1.8 L9.3 16" stroke="#CF8456" stroke-width="1.5" stroke-linecap="round"/><path d="M14.7 5.1 L19.3 8.5" stroke="#CF8456" stroke-width="1.5" stroke-linecap="round"/><path d="M21 10.4 C21.6 14.4 20 17.6 17.4 18.8 C14.8 19.9 12.4 19.4 11.3 17.6 C10.2 15.6 11.2 13.2 13.6 12.4 C16 11.7 19 12 21 10.4 Z" fill="#5FA664"/><path d="M12.4 18.2 C14.6 17.8 16.6 16.6 18.2 14.8" stroke="#3D7443" stroke-width="0.7" fill="none" stroke-dasharray="1.6 0.8"/></svg>
<span style="position:absolute;left:814px;top:65.0px;height:24px;line-height:24px;font-family:'Liberation Sans','Noto Sans CJK SC',sans-serif;font-size:16.5px;color:#DFE1E5;font-weight:400;white-space:pre;letter-spacing:0.571px;">applicationContext.xml</span>
<svg style="position:absolute;left:1044px;top:67px;overflow:visible" width="20" height="20" viewBox="0 0 20 20" fill="none" ><path d="M7.6 4.8 L1.7 9.2 L7.6 13.6" stroke="#CF8456" stroke-width="1.5" stroke-linecap="round" stroke-linejoin="round"/><path d="M12.7 1.8 L9.3 16" stroke="#CF8456" stroke-width="1.5" stroke-linecap="round"/><path d="M14.7 5.1 L19.3 8.5" stroke="#CF8456" stroke-width="1.5" stroke-linecap="round"/><path d="M21 10.4 C21.6 14.4 20 17.6 17.4 18.8 C14.8 19.9 12.4 19.4 11.3 17.6 C10.2 15.6 11.2 13.2 13.6 12.4 C16 11.7 19 12 21 10.4 Z" fill="#5FA664"/><path d="M12.4 18.2 C14.6 17.8 16.6 16.6 18.2 14.8" stroke="#3D7443" stroke-width="0.7" fill="none" stroke-dasharray="1.6 0.8"/></svg>
<span style="position:absolute;left:1071px;top:65.0px;height:24px;line-height:24px;font-family:'Liberation Sans','Noto Sans CJK SC',sans-serif;font-size:16.5px;color:#DFE1E5;font-weight:400;white-space:pre;letter-spacing:0.686px;">springmvc-config.xml</span>
<svg style="position:absolute;left:1291px;top:67px;overflow:visible" width="20" height="20" viewBox="0 0 20 20" fill="none" ><path d="M7.6 4.8 L1.7 9.2 L7.6 13.6" stroke="#CF8456" stroke-width="1.5" stroke-linecap="round" stroke-linejoin="round"/><path d="M12.7 1.8 L9.3 16" stroke="#CF8456" stroke-width="1.5" stroke-linecap="round"/><path d="M14.7 5.1 L19.3 8.5" stroke="#CF8456" stroke-width="1.5" stroke-linecap="round"/><path d="M21 10.4 C21.6 14.4 20 17.6 17.4 18.8 C14.8 19.9 12.4 19.4 11.3 17.6 C10.2 15.6 11.2 13.2 13.6 12.4 C16 11.7 19 12 21 10.4 Z" fill="#5FA664"/><path d="M12.4 18.2 C14.6 17.8 16.6 16.6 18.2 14.8" stroke="#3D7443" stroke-width="0.7" fill="none" stroke-dasharray="1.6 0.8"/></svg>
<span style="position:absolute;left:1319px;top:65.0px;height:24px;line-height:24px;font-family:'Liberation Sans','Noto Sans CJK SC',sans-serif;font-size:16.5px;color:#DFE1E5;font-weight:400;white-space:pre;letter-spacing:0.414px;">web.xml</span>
<svg style="position:absolute;left:1396.5px;top:71.4px;overflow:visible" width="9" height="9" viewBox="0 0 9 9" fill="none" ><path d="M0.5 0.5 L8.5 8.5 M8.5 0.5 L0.5 8.5" stroke="#7F838B" stroke-width="1.2" stroke-linecap="round"/></svg>
<svg style="position:absolute;left:1435px;top:66px;overflow:visible" width="20" height="20" viewBox="0 0 20 20" fill="none" ><path d="M16.25 10.00 L16.23 10.54 L16.49 11.14 L17.05 11.89 L17.53 12.74 L17.57 13.53 L17.23 14.17 L16.84 14.79 L16.14 15.15 L15.16 15.16 L14.24 15.05 L13.58 15.12 L13.12 15.41 L12.64 15.66 L12.25 16.19 L11.89 17.05 L11.39 17.89 L10.73 18.32 L10.00 18.35 L9.27 18.32 L8.61 17.89 L8.11 17.05 L7.75 16.19 L7.36 15.66 L6.88 15.41 L6.42 15.12 L5.76 15.05 L4.84 15.16 L3.86 15.15 L3.16 14.79 L2.77 14.18 L2.43 13.53 L2.47 12.74 L2.95 11.89 L3.51 11.14 L3.77 10.54 L3.75 10.00 L3.77 9.46 L3.51 8.86 L2.95 8.11 L2.47 7.26 L2.43 6.47 L2.77 5.82 L3.16 5.21 L3.86 4.85 L4.84 4.84 L5.76 4.95 L6.42 4.88 L6.87 4.59 L7.36 4.34 L7.75 3.81 L8.11 2.95 L8.61 2.11 L9.27 1.68 L10.00 1.65 L10.73 1.68 L11.39 2.11 L11.89 2.95 L12.25 3.81 L12.64 4.34 L13.12 4.59 L13.58 4.88 L14.24 4.95 L15.16 4.84 L16.14 4.85 L16.84 5.21 L17.23 5.83 L17.57 6.47 L17.53 7.26 L17.05 8.11 L16.49 8.86 L16.23 9.46 Z" stroke="#CED0D6" stroke-width="1.4" stroke-linejoin="round"/><circle cx="10" cy="10" r="2.6" stroke="#CED0D6" stroke-width="1.4"/></svg>
<span style="position:absolute;left:1461px;top:65.0px;height:24px;line-height:24px;font-family:'Liberation Sans','Noto Sans CJK SC',sans-serif;font-size:16.5px;color:#DFE1E5;font-weight:400;white-space:pre;letter-spacing:0.464px;">mysql.properties</span>
<svg style="position:absolute;left:1657px;top:68px;overflow:visible" width="4" height="16" viewBox="0 0 4 16" fill="none" ><circle cx="2" cy="2" r="1.4" fill="#CED0D6"/><circle cx="2" cy="8" r="1.4" fill="#CED0D6"/><circle cx="2" cy="14" r="1.4" fill="#CED0D6"/></svg>
<div style="position:absolute;left:1278px;top:96.8px;width:143px;height:4.4px;background:#585B63;border-radius:2px 2px 0 0"></div>
<div style="position:absolute;left:623px;top:487px;width:1059px;height:27.5px;background:#26282E;"></div>
<div style="position:absolute;left:706px;top:102px;width:1px;height:912px;background:#313438;"></div>
<div style="position:absolute;left:747px;top:487px;width:1px;height:55px;background:#393B40;"></div>
<div style="position:absolute;left:1089px;top:488.5px;width:10px;height:25px;background:#43454A;"></div>
<div style="position:absolute;left:1249px;top:488.5px;width:10px;height:25px;background:#43454A;"></div>
<div class="c" style="left:623px;width:39.2px;top:104.60px;text-align:right;letter-spacing:-0.75px;transform:scaleX(0.94);transform-origin:right center;color:#4B5059">1</div>
<div class="c" style="left:709px;top:104.60px"><span class="t">&lt;?</span>xml version<span class="s">=&quot;1.0&quot;</span> encoding<span class="s">=&quot;UTF-8&quot;</span><span class="t">?&gt;</span></div>
<div class="c" style="left:623px;width:39.2px;top:132.10px;text-align:right;letter-spacing:-0.75px;transform:scaleX(0.94);transform-origin:right center;color:#4B5059">2</div>
<div class="c" style="left:709px;top:132.10px"><span class="t">&lt;beans</span> xmlns<span class="s">=&quot;http://www.springframework.org/schema/beans&quot;</span></div>
<div class="c" style="left:623px;width:39.2px;top:159.60px;text-align:right;letter-spacing:-0.75px;transform:scaleX(0.94);transform-origin:right center;color:#4B5059">3</div>
<div class="c" style="left:779px;top:159.60px">xmlns:<span class="n">context</span><span class="s">=&quot;http://www.springframework.org/schema/context&quot;</span></div>
<div class="c" style="left:623px;width:39.2px;top:187.10px;text-align:right;letter-spacing:-0.75px;transform:scaleX(0.94);transform-origin:right center;color:#4B5059">4</div>
<div class="c" style="left:779px;top:187.10px">xmlns:<span class="n">mvc</span><span class="s">=&quot;http://www.springframework.org/schema/mvc&quot;</span></div>
<div class="c" style="left:623px;width:39.2px;top:214.60px;text-align:right;letter-spacing:-0.75px;transform:scaleX(0.94);transform-origin:right center;color:#4B5059">5</div>
<div class="c" style="left:779px;top:214.60px">xmlns:<span class="n">xsi</span><span class="s">=&quot;http://www.w3.org/2001/XMLSchema-instance&quot;</span></div>
<div class="c" style="left:623px;width:39.2px;top:242.10px;text-align:right;letter-spacing:-0.75px;transform:scaleX(0.94);transform-origin:right center;color:#4B5059">6</div>
<div class="c" style="left:779px;top:242.10px"><span class="n">xsi</span>:schemaLocation<span class="s">=&quot;http://www.springframework.org/schema/beans</span></div>
<div class="c" style="left:623px;width:39.2px;top:269.60px;text-align:right;letter-spacing:-0.75px;transform:scaleX(0.94);transform-origin:right center;color:#4B5059">7</div>
<div class="c" style="left:779px;top:269.60px"><span class="s">http://www.springframework.org/schema/beans/spring-beans.xsd</span></div>
<div class="c" style="left:623px;width:39.2px;top:297.10px;text-align:right;letter-spacing:-0.75px;transform:scaleX(0.94);transform-origin:right center;color:#4B5059">8</div>
<div class="c" style="left:789px;top:297.10px"><span class="s">http://www.springframework.org/schema/context</span></div>
<div class="c" style="left:623px;width:39.2px;top:324.60px;text-align:right;letter-spacing:-0.75px;transform:scaleX(0.94);transform-origin:right center;color:#4B5059">9</div>
<div class="c" style="left:779px;top:324.60px"><span class="s">http://www.springframework.org/schema/context/spring-context.xsd</span></div>
<div class="c" style="left:623px;width:39.2px;top:352.10px;text-align:right;letter-spacing:-0.75px;transform:scaleX(0.94);transform-origin:right center;color:#4B5059">10</div>
<div class="c" style="left:789px;top:352.10px"><span class="s">http://www.springframework.org/schema/mvc</span></div>
<div class="c" style="left:623px;width:39.2px;top:379.60px;text-align:right;letter-spacing:-0.75px;transform:scaleX(0.94);transform-origin:right center;color:#4B5059">11</div>
<div class="c" style="left:779px;top:379.60px"><span class="s">http://www.springframework.org/schema/mvc/spring-mvc.xsd&quot;</span><span class="t">&gt;</span></div>
<div class="c" style="left:623px;width:39.2px;top:407.10px;text-align:right;letter-spacing:-0.75px;transform:scaleX(0.94);transform-origin:right center;color:#4B5059">12</div>
<div class="c" style="left:623px;width:39.2px;top:434.60px;text-align:right;letter-spacing:-0.75px;transform:scaleX(0.94);transform-origin:right center;color:#4B5059">13</div>
<div class="c" style="left:749px;top:434.60px"><span class="m">&lt;!--1.<span class="k">配置视图解析器</span>--&gt;</span></div>
<div class="c" style="left:623px;width:39.2px;top:462.10px;text-align:right;letter-spacing:-0.75px;transform:scaleX(0.94);transform-origin:right center;color:#4B5059">14</div>
<div class="c" style="left:749px;top:462.10px"><span class="t">&lt;bean</span> class<span class="s">=&quot;org.springframework.web.servlet.view.InternalResourceViewResolver&quot;</span><span class="t">&gt;</span></div>
<div class="c" style="left:623px;width:39.2px;top:489.60px;text-align:right;letter-spacing:-0.75px;transform:scaleX(0.94);transform-origin:right center;color:#A1A3AB">15</div>
<div class="c" style="left:789px;top:489.60px"><span class="t">&lt;property</span> name<span class="s">=&quot;prefix&quot;</span> value<span class="s">=&quot;/WEB-INF/pages/&quot;</span><span class="t">/&gt;</span></div>
<div class="c" style="left:623px;width:39.2px;top:517.10px;text-align:right;letter-spacing:-0.75px;transform:scaleX(0.94);transform-origin:right center;color:#4B5059">16</div>
<div class="c" style="left:789px;top:517.10px"><span class="t">&lt;property</span> name<span class="s">=&quot;suffix&quot;</span> value<span class="s">=&quot;.jsp&quot;</span><span class="t">/&gt;</span></div>
<div class="c" style="left:623px;width:39.2px;top:544.60px;text-align:right;letter-spacing:-0.75px;transform:scaleX(0.94);transform-origin:right center;color:#4B5059">17</div>
<div class="c" style="left:749px;top:544.60px"><span class="t">&lt;/bean&gt;</span></div>
<div class="c" style="left:623px;width:39.2px;top:572.10px;text-align:right;letter-spacing:-0.75px;transform:scaleX(0.94);transform-origin:right center;color:#4B5059">18</div>
<div class="c" style="left:623px;width:39.2px;top:599.60px;text-align:right;letter-spacing:-0.75px;transform:scaleX(0.94);transform-origin:right center;color:#4B5059">19</div>
<div class="c" style="left:749px;top:599.60px"><span class="m">&lt;!--2.<span class="k">开启注解扫描</span>--&gt;</span></div>
<div class="c" style="left:623px;width:39.2px;top:627.10px;text-align:right;letter-spacing:-0.75px;transform:scaleX(0.94);transform-origin:right center;color:#4B5059">20</div>
<div class="c" style="left:749px;top:627.10px"><span class="t">&lt;</span><span class="n">context</span><span class="t">:component-scan</span> base-package<span class="s">=&quot;edu.</span><span class="s w">shifan</span><span class="s">.controller&quot;</span><span class="t">/&gt;</span></div>
<div class="c" style="left:623px;width:39.2px;top:654.60px;text-align:right;letter-spacing:-0.75px;transform:scaleX(0.94);transform-origin:right center;color:#4B5059">21</div>
<div class="c" style="left:623px;width:39.2px;top:682.10px;text-align:right;letter-spacing:-0.75px;transform:scaleX(0.94);transform-origin:right center;color:#4B5059">22</div>
<div class="c" style="left:749px;top:682.10px"><span class="m">&lt;!--3.<span class="k">开启统一资源处理</span>--&gt;</span></div>
<div class="c" style="left:623px;width:39.2px;top:709.60px;text-align:right;letter-spacing:-0.75px;transform:scaleX(0.94);transform-origin:right center;color:#4B5059">23</div>
<div class="c" style="left:749px;top:709.60px"><span class="t">&lt;</span><span class="n">mvc</span><span class="t">:default-servlet-handler/&gt;</span></div>
<div class="c" style="left:623px;width:39.2px;top:737.10px;text-align:right;letter-spacing:-0.75px;transform:scaleX(0.94);transform-origin:right center;color:#4B5059">24</div>
<div class="c" style="left:623px;width:39.2px;top:764.60px;text-align:right;letter-spacing:-0.75px;transform:scaleX(0.94);transform-origin:right center;color:#4B5059">25</div>
<div class="c" style="left:749px;top:764.60px"><span class="m">&lt;!--4.<span class="k">开启注解驱动</span>--&gt;</span></div>
<div class="c" style="left:623px;width:39.2px;top:792.10px;text-align:right;letter-spacing:-0.75px;transform:scaleX(0.94);transform-origin:right center;color:#4B5059">26</div>
<div class="c" style="left:749px;top:792.10px"><span class="t">&lt;</span><span class="n">mvc</span><span class="t">:annotation-driven/&gt;</span></div>
<div class="c" style="left:623px;width:39.2px;top:819.60px;text-align:right;letter-spacing:-0.75px;transform:scaleX(0.94);transform-origin:right center;color:#4B5059">27</div>
<div class="c" style="left:623px;width:39.2px;top:847.10px;text-align:right;letter-spacing:-0.75px;transform:scaleX(0.94);transform-origin:right center;color:#4B5059">28</div>
<div class="c" style="left:709px;top:847.10px"><span class="t">&lt;/beans&gt;</span></div>
<svg style="position:absolute;left:1169px;top:646.5px;overflow:visible" width="60" height="4" viewBox="0 0 60 4" fill="none" ><polyline points="0,3.0 2,0.8 4,3.0 6,0.8 8,3.0 10,0.8 12,3.0 14,0.8 16,3.0 18,0.8 20,3.0 22,0.8 24,3.0 26,0.8 28,3.0 30,0.8 32,3.0 34,0.8 36,3.0 38,0.8 40,3.0 42,0.8 44,3.0 46,0.8 48,3.0 50,0.8 52,3.0 54,0.8 56,3.0 58,0.8 60,3.0" stroke="#5B9A63" stroke-width="0.9" fill="none"/></svg>
<svg style="position:absolute;left:669px;top:135px;overflow:visible" width="17" height="17" viewBox="0 0 17 17" fill="none" ><rect x="0.5" y="1" width="4.2" height="4.2" fill="#9DA0A8"/><rect x="11" y="1" width="4.8" height="4.8" fill="#9DA0A8"/><rect x="0.5" y="11" width="4.8" height="4.8" fill="#9DA0A8"/><path d="M6 2.6 H9.6 M2.4 6.6 V9.4" stroke="#6F737A" stroke-width="1.2" stroke-dasharray="1.3 1"/><path d="M7 14.6 C6.6 11.2 9.6 9.2 15.6 9.4 C16 13.8 12.6 17 8.6 15.8 Z" fill="#5FAD65"/></svg>
<svg style="position:absolute;left:668px;top:629px;overflow:visible" width="20" height="20" viewBox="0 0 20 20" fill="none" ><circle cx="9.5" cy="9.5" r="8.1" stroke="#57A864" stroke-width="1.15" fill="#243828"/><path d="M3.6 4 L9.8 9.8" stroke="#57A864" stroke-width="1.15"/><circle cx="13.5" cy="13.6" r="4.9" fill="#1E1F22"/><path d="M15.4 15.6 L17.6 17.6" stroke="#1E1F22" stroke-width="3.4" stroke-linecap="round"/><circle cx="13.5" cy="13.6" r="3" stroke="#E4E5E9" stroke-width="1.25" fill="#505359"/><path d="M15.7 15.8 L17.6 17.5" stroke="#E4E5E9" stroke-width="1.3" stroke-linecap="round"/></svg>
<svg style="position:absolute;left:1594px;top:109px;overflow:visible" width="20" height="20" viewBox="0 0 20 20" fill="none" ><path d="M3 8.6 L7.6 13 L16.2 4" stroke="#57A864" stroke-width="2.3" stroke-linejoin="miter" fill="none"/><path d="M2.4 18.8 L4.8 15.6 L7.2 18.2 L9.6 15.6 L12 18.2 L14.4 15.6 L15.6 16.8" stroke="#57A864" stroke-width="1.1" fill="none"/></svg>
<span style="position:absolute;left:1614.6px;top:107.3px;height:24px;line-height:24px;font-family:'Liberation Sans','Noto Sans CJK SC',sans-serif;font-size:16.8px;color:#BCBEC4;font-weight:400;white-space:pre;letter-spacing:0.000px;">1</span>
<svg style="position:absolute;left:1636.3px;top:116.6px;overflow:visible" width="9.4" height="4.8" viewBox="0 0 9.4 4.8" fill="none" ><path d="M0 4.8 L4.7 0 L9.4 4.8" stroke="#BCBEC4" stroke-width="1.4" stroke-linecap="round" stroke-linejoin="round"/></svg>
<svg style="position:absolute;left:1662.3px;top:116.6px;overflow:visible" width="9.4" height="4.8" viewBox="0 0 9.4 4.8" fill="none" ><path d="M0 0 L4.7 4.8 L9.4 0" stroke="#BCBEC4" stroke-width="1.4" stroke-linecap="round" stroke-linejoin="round"/></svg>
<div style="position:absolute;left:623px;top:1014px;width:1059px;height:1px;background:#393B40;"></div>
<span style="position:absolute;left:636px;top:1017.7px;height:24px;line-height:24px;font-family:'Liberation Sans','Noto Sans CJK SC',sans-serif;font-size:16px;color:#A8ADB5;font-weight:400;white-space:pre;letter-spacing:0.602px;">beans</span>
<svg style="position:absolute;left:697.75px;top:1026.0px;overflow:visible" width="3.5" height="7" viewBox="0 0 3.5 7" fill="none" ><path d="M0 0 L3.5 3.5 L0 7" stroke="#6F737A" stroke-width="1.2" stroke-linecap="round" stroke-linejoin="round"/></svg>
<span style="position:absolute;left:714px;top:1017.7px;height:24px;line-height:24px;font-family:'Liberation Sans','Noto Sans CJK SC',sans-serif;font-size:16px;color:#A8ADB5;font-weight:400;white-space:pre;letter-spacing:0.469px;">bean</span>
<svg style="position:absolute;left:765.75px;top:1026.0px;overflow:visible" width="3.5" height="7" viewBox="0 0 3.5 7" fill="none" ><path d="M0 0 L3.5 3.5 L0 7" stroke="#6F737A" stroke-width="1.2" stroke-linecap="round" stroke-linejoin="round"/></svg>
<span style="position:absolute;left:781px;top:1017.7px;height:24px;line-height:24px;font-family:'Liberation Sans','Noto Sans CJK SC',sans-serif;font-size:16px;color:#A8ADB5;font-weight:400;white-space:pre;letter-spacing:0.900px;">property</span>
<div style="position:absolute;left:1683px;top:51px;width:51px;height:994px;background:#2B2D30;"></div>
<div style="position:absolute;left:1682px;top:51px;width:1px;height:994px;background:#1E1F22;"></div>
<svg style="position:absolute;left:1697px;top:65px;overflow:visible" width="23" height="23" viewBox="0 0 23 23" fill="none" ><path d="M11.5 2 C7.6 2 5.2 5 5.2 8.6 V12 C5.2 13.6 4.4 15 3.2 16.2 L2.2 17.2 H20.8 L19.8 16.2 C18.6 15 17.8 13.6 17.8 12 V8.6" stroke="#CED0D6" stroke-width="1.6" stroke-linejoin="round" stroke-linecap="round"/><path d="M8.6 20 C9.2 21.6 10.2 22.2 11.5 22.2 C12.8 22.2 13.8 21.6 14.4 20 Z" fill="#CED0D6"/></svg>
<div style="position:absolute;left:1712.5px;top:64px;width:8.6px;height:8.6px;border-radius:50%;background:#548AF7"></div>
<svg style="position:absolute;left:1694px;top:112px;overflow:visible" width="30" height="30" viewBox="0 0 30 30" fill="none" ><path d="M6.24 6.65 C7.28 6.40 10.31 5.13 12.50 5.13 C14.69 5.13 17.52 5.42 19.40 6.65 C21.28 7.88 23.33 10.74 23.80 12.50 C24.27 14.26 23.40 16.05 22.20 17.20 C21.00 18.35 18.37 19.22 16.60 19.40 C14.83 19.58 12.65 18.95 11.60 18.30 C10.55 17.65 10.20 16.28 10.30 15.50 C10.40 14.72 11.47 13.87 12.20 13.60 C12.93 13.33 14.28 13.85 14.70 13.90" stroke="#CED0D6" stroke-width="1.55" stroke-linecap="round" fill="none"/><path d="M22.86 22.45 C21.82 22.70 18.79 23.97 16.60 23.97 C14.41 23.97 11.58 23.68 9.70 22.45 C7.82 21.22 5.77 18.36 5.30 16.60 C4.83 14.84 5.70 13.05 6.90 11.90 C8.10 10.75 10.73 9.88 12.50 9.70 C14.27 9.52 16.45 10.15 17.50 10.80 C18.55 11.45 18.90 12.82 18.80 13.60 C18.70 14.38 17.63 15.23 16.90 15.50 C16.17 15.77 14.82 15.25 14.40 15.20" stroke="#CED0D6" stroke-width="1.55" stroke-linecap="round" fill="none"/></svg>
<svg style="position:absolute;left:1698px;top:165px;overflow:visible" width="21" height="23.5" viewBox="0 0 21 23.5" fill="none" ><ellipse cx="10.5" cy="4.6" rx="9.4" ry="3.8" stroke="#CED0D6" stroke-width="1.5"/><path d="M1.1 4.6 V18.6 C1.1 20.8 5.2 22.6 10.5 22.6 C15.8 22.6 19.9 20.8 19.9 18.6 V4.6" stroke="#CED0D6" stroke-width="1.5"/><path d="M1.1 9.4 C1.1 11.6 5.2 13.2 10.5 13.2 C15.8 13.2 19.9 11.6 19.9 9.4 M1.1 14 C1.1 16.2 5.2 17.8 10.5 17.8 C15.8 17.8 19.9 16.2 19.9 14" stroke="#CED0D6" stroke-width="1.5"/></svg>
<div style="position:absolute;left:0px;top:1044px;width:1734px;height:1px;background:#1E1F22;"></div>
<div style="position:absolute;left:0px;top:1045px;width:1734px;height:37px;background:#2B2D30;"></div>
<div style="position:absolute;left:19px;top:1057.8px;width:10px;height:10.4px;border:1.6px solid #548AF7;border-radius:2.6px"></div>
<span style="position:absolute;left:34px;top:1050.4px;height:24px;line-height:24px;font-family:'Liberation Sans','Noto Sans CJK SC',sans-serif;font-size:16.5px;color:#A8ADB5;font-weight:400;white-space:pre;letter-spacing:-0.040px;">Java_ssm</span>
<svg style="position:absolute;left:122.25px;top:1056.8px;overflow:visible" width="4.5" height="9" viewBox="0 0 4.5 9" fill="none" ><path d="M0 0 L4.5 4.5 L0 9" stroke="#A8ADB5" stroke-width="1.2" stroke-linecap="round" stroke-linejoin="round"/></svg>
<span style="position:absolute;left:139px;top:1050.4px;height:24px;line-height:24px;font-family:'Liberation Sans','Noto Sans CJK SC',sans-serif;font-size:16.5px;color:#A8ADB5;font-weight:400;white-space:pre;letter-spacing:0.859px;">web</span>
<svg style="position:absolute;left:183.25px;top:1056.8px;overflow:visible" width="4.5" height="9" viewBox="0 0 4.5 9" fill="none" ><path d="M0 0 L4.5 4.5 L0 9" stroke="#A8ADB5" stroke-width="1.2" stroke-linecap="round" stroke-linejoin="round"/></svg>
<span style="position:absolute;left:201px;top:1050.4px;height:24px;line-height:24px;font-family:'Liberation Sans','Noto Sans CJK SC',sans-serif;font-size:16.5px;color:#A8ADB5;font-weight:400;white-space:pre;letter-spacing:-0.279px;">WEB-INF</span>
<svg style="position:absolute;left:283.75px;top:1056.8px;overflow:visible" width="4.5" height="9" viewBox="0 0 4.5 9" fill="none" ><path d="M0 0 L4.5 4.5 L0 9" stroke="#A8ADB5" stroke-width="1.2" stroke-linecap="round" stroke-linejoin="round"/></svg>
<svg style="position:absolute;left:301px;top:1051px;overflow:visible" width="20" height="20" viewBox="0 0 16 16" fill="none" ><path d="M1.5 4.2 C1.5 3.26 2.26 2.5 3.2 2.5 H5.6 C6.05 2.5 6.48 2.68 6.8 3 L7.7 3.9 C8.02 4.22 8.45 4.4 8.9 4.4 H12.8 C13.74 4.4 14.5 5.16 14.5 6.1 V11.8 C14.5 12.74 13.74 13.5 12.8 13.5 H3.2 C2.26 13.5 1.5 12.74 1.5 11.8 Z" fill="#43454A" stroke="#CED0D6" stroke-width="1"/></svg>
<span style="position:absolute;left:326px;top:1050.4px;height:24px;line-height:24px;font-family:'Liberation Sans','Noto Sans CJK SC',sans-serif;font-size:16.5px;color:#A8ADB5;font-weight:400;white-space:pre;letter-spacing:0.258px;">pages</span>
<span style="position:absolute;left:1391px;top:1050.4px;height:24px;line-height:24px;font-family:'Liberation Sans','Noto Sans CJK SC',sans-serif;font-size:16.5px;color:#A8ADB5;font-weight:400;white-space:pre;letter-spacing:0.176px;">15:56</span>
<span style="position:absolute;left:1454px;top:1050.4px;height:24px;line-height:24px;font-family:'Liberation Sans','Noto Sans CJK SC',sans-serif;font-size:16.5px;color:#A8ADB5;font-weight:400;white-space:pre;letter-spacing:-3.266px;">LF</span>
<span style="position:absolute;left:1492px;top:1050.4px;height:24px;line-height:24px;font-family:'Liberation Sans','Noto Sans CJK SC',sans-serif;font-size:16.5px;color:#6F737A;font-weight:400;white-space:pre;letter-spacing:0.562px;">UTF-8</span>
<svg style="position:absolute;left:1556.0px;top:1048.0px;overflow:visible" width="30" height="30" viewBox="0 0 30 30" fill="none" ><path d="M8.85 8.92 C9.62 8.73 11.86 7.75 13.48 7.75 C15.11 7.75 17.20 7.97 18.59 8.92 C19.98 9.87 21.50 12.07 21.84 13.42 C22.19 14.78 21.55 16.15 20.66 17.04 C19.77 17.92 17.82 18.59 16.52 18.73 C15.21 18.87 13.59 18.39 12.82 17.89 C12.04 17.39 11.78 16.33 11.86 15.73 C11.93 15.13 12.72 14.47 13.26 14.27 C13.80 14.06 14.80 14.46 15.11 14.50" stroke="#CED0D6" stroke-width="1.25" stroke-linecap="round" fill="none"/><path d="M21.15 21.08 C20.38 21.27 18.14 22.25 16.52 22.25 C14.89 22.25 12.80 22.03 11.41 21.08 C10.02 20.13 8.50 17.93 8.16 16.58 C7.81 15.22 8.45 13.85 9.34 12.96 C10.23 12.08 12.18 11.41 13.48 11.27 C14.79 11.13 16.41 11.61 17.18 12.11 C17.96 12.61 18.22 13.67 18.14 14.27 C18.07 14.87 17.28 15.53 16.74 15.73 C16.20 15.94 15.20 15.54 14.89 15.50" stroke="#CED0D6" stroke-width="1.25" stroke-linecap="round" fill="none"/><path d="M7.6 22.4 L22.4 7.6" stroke="#2B2D30" stroke-width="3.6"/><path d="M7.2 22.5 L22.7 7.3" stroke="#CED0D6" stroke-width="1.3" stroke-linecap="round"/></svg>
<span style="position:absolute;left:1601px;top:1050.4px;height:24px;line-height:24px;font-family:'Liberation Sans','Noto Sans CJK SC',sans-serif;font-size:16.5px;color:#A8ADB5;font-weight:400;white-space:pre;letter-spacing:0.422px;">4 spaces</span>
<svg style="position:absolute;left:1693px;top:1053px;overflow:visible" width="20" height="20" viewBox="0 0 20 20" fill="none" ><rect x="2.5" y="8.3" width="10.4" height="8.6" rx="1.8" stroke="#CED0D6" stroke-width="1.4"/><path d="M11.4 8.2 V6.4 C11.4 4.2 12.8 3.1 14.6 3.1 C16.4 3.1 17.7 4.2 17.7 6.4 V8.8" stroke="#CED0D6" stroke-width="1.4" stroke-linecap="round"/><path d="M8 10.9 V13.9" stroke="#CED0D6" stroke-width="1.5"/></svg>
<div style="position:absolute;left:1578px;top:1076.3px;width:27.5px;height:12px;background:#F26B2E;border-radius:2.5px;transform:rotate(-12.5deg);transform-origin:right top"></div>
</div></div></body></html>
